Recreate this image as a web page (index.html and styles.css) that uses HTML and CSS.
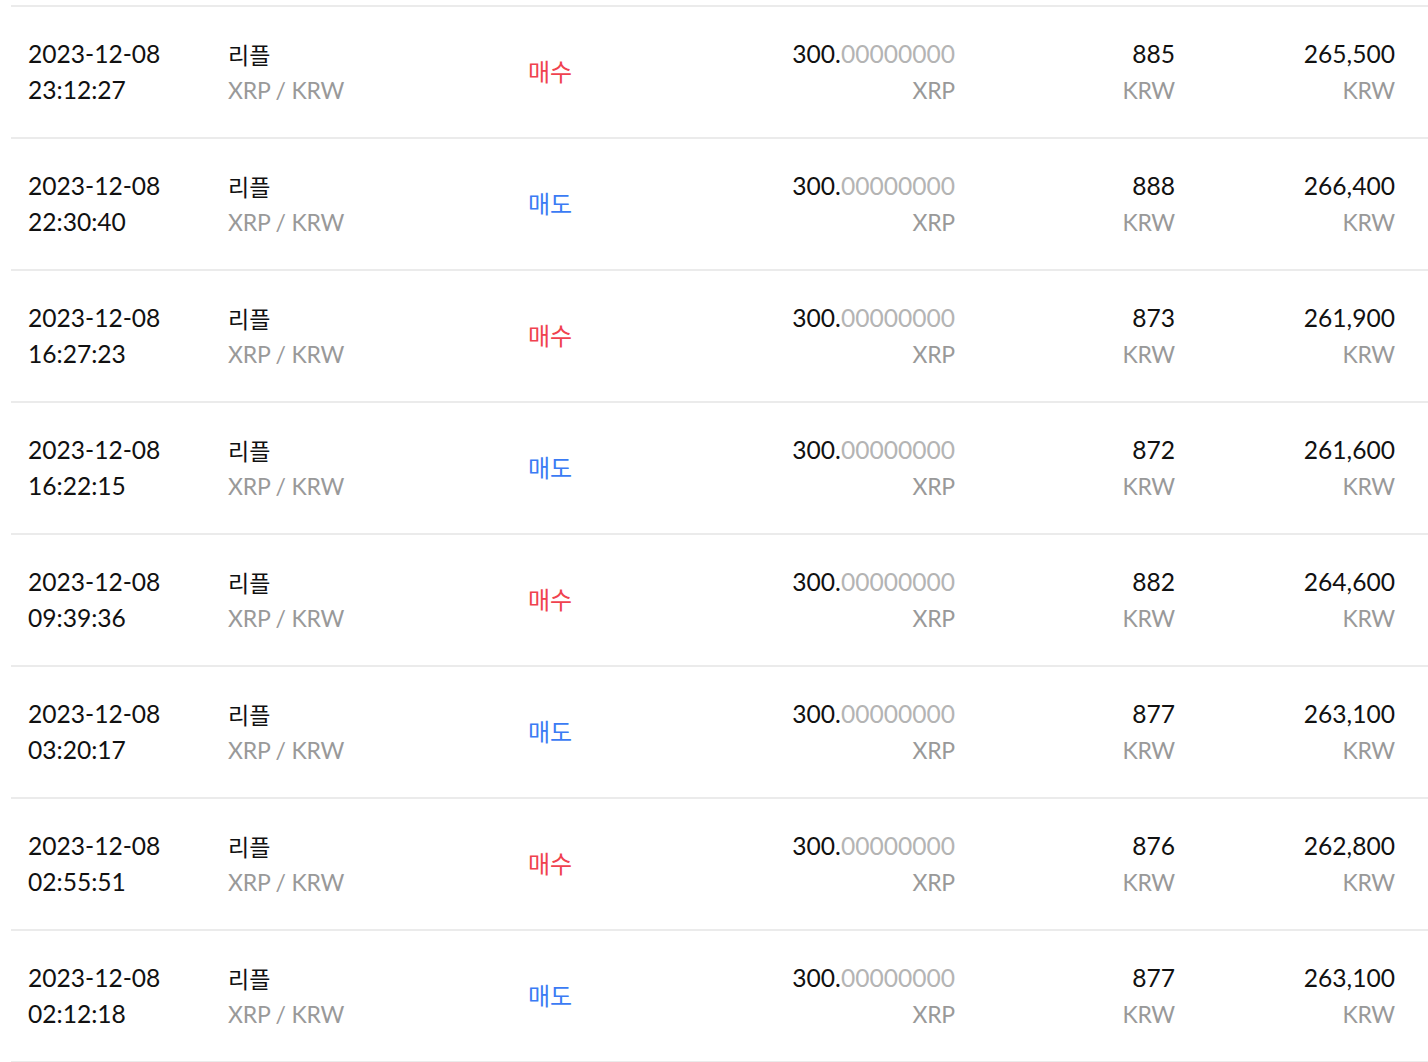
FILE: index.html
```html
<!DOCTYPE html>
<html lang="ko">
<head>
<meta charset="utf-8">
<title>체결 내역</title>
<link rel="stylesheet" href="styles.css">
</head>
<body>
<div class="list">
  <div class="row">
    <div class="cell"><div>2023-12-08</div><div>23:12:27</div></div>
    <div class="cell"><div class="kr">리플</div><div class="sub">XRP / KRW</div></div>
    <div class="type buy">매수</div>
    <div class="cell num"><div>300.<span class="dec">00000000</span></div><div class="sub">XRP</div></div>
    <div class="cell num"><div>885</div><div class="sub">KRW</div></div>
    <div class="cell num"><div>265,500</div><div class="sub">KRW</div></div>
  </div>
  <div class="row">
    <div class="cell"><div>2023-12-08</div><div>22:30:40</div></div>
    <div class="cell"><div class="kr">리플</div><div class="sub">XRP / KRW</div></div>
    <div class="type sell">매도</div>
    <div class="cell num"><div>300.<span class="dec">00000000</span></div><div class="sub">XRP</div></div>
    <div class="cell num"><div>888</div><div class="sub">KRW</div></div>
    <div class="cell num"><div>266,400</div><div class="sub">KRW</div></div>
  </div>
  <div class="row">
    <div class="cell"><div>2023-12-08</div><div>16:27:23</div></div>
    <div class="cell"><div class="kr">리플</div><div class="sub">XRP / KRW</div></div>
    <div class="type buy">매수</div>
    <div class="cell num"><div>300.<span class="dec">00000000</span></div><div class="sub">XRP</div></div>
    <div class="cell num"><div>873</div><div class="sub">KRW</div></div>
    <div class="cell num"><div>261,900</div><div class="sub">KRW</div></div>
  </div>
  <div class="row">
    <div class="cell"><div>2023-12-08</div><div>16:22:15</div></div>
    <div class="cell"><div class="kr">리플</div><div class="sub">XRP / KRW</div></div>
    <div class="type sell">매도</div>
    <div class="cell num"><div>300.<span class="dec">00000000</span></div><div class="sub">XRP</div></div>
    <div class="cell num"><div>872</div><div class="sub">KRW</div></div>
    <div class="cell num"><div>261,600</div><div class="sub">KRW</div></div>
  </div>
  <div class="row">
    <div class="cell"><div>2023-12-08</div><div>09:39:36</div></div>
    <div class="cell"><div class="kr">리플</div><div class="sub">XRP / KRW</div></div>
    <div class="type buy">매수</div>
    <div class="cell num"><div>300.<span class="dec">00000000</span></div><div class="sub">XRP</div></div>
    <div class="cell num"><div>882</div><div class="sub">KRW</div></div>
    <div class="cell num"><div>264,600</div><div class="sub">KRW</div></div>
  </div>
  <div class="row">
    <div class="cell"><div>2023-12-08</div><div>03:20:17</div></div>
    <div class="cell"><div class="kr">리플</div><div class="sub">XRP / KRW</div></div>
    <div class="type sell">매도</div>
    <div class="cell num"><div>300.<span class="dec">00000000</span></div><div class="sub">XRP</div></div>
    <div class="cell num"><div>877</div><div class="sub">KRW</div></div>
    <div class="cell num"><div>263,100</div><div class="sub">KRW</div></div>
  </div>
  <div class="row">
    <div class="cell"><div>2023-12-08</div><div>02:55:51</div></div>
    <div class="cell"><div class="kr">리플</div><div class="sub">XRP / KRW</div></div>
    <div class="type buy">매수</div>
    <div class="cell num"><div>300.<span class="dec">00000000</span></div><div class="sub">XRP</div></div>
    <div class="cell num"><div>876</div><div class="sub">KRW</div></div>
    <div class="cell num"><div>262,800</div><div class="sub">KRW</div></div>
  </div>
  <div class="row">
    <div class="cell"><div>2023-12-08</div><div>02:12:18</div></div>
    <div class="cell"><div class="kr">리플</div><div class="sub">XRP / KRW</div></div>
    <div class="type sell">매도</div>
    <div class="cell num"><div>300.<span class="dec">00000000</span></div><div class="sub">XRP</div></div>
    <div class="cell num"><div>877</div><div class="sub">KRW</div></div>
    <div class="cell num"><div>263,100</div><div class="sub">KRW</div></div>
  </div>
</div>
</body>
</html>
```

FILE: styles.css
```css
html, body {
  margin: 0;
  padding: 0;
  background: #ffffff;
}

body {
  font-family: Lato, "Noto Sans CJK KR", sans-serif;
  font-size: 24.6px;
  color: #111111;
  overflow: hidden;
}

.list {
  margin: 5px 0 0 11px;
  border-top: 2px solid #ebebeb;
}

.row {
  display: grid;
  grid-template-columns: 200px 300px 1fr 220px 220px 220px;
  align-items: center;
  height: 130px;
  padding: 0 33px 0 17px;
  border-bottom: 2px solid #ebebeb;
}

.cell {
  line-height: 36px;
}

.kr {
  font-family: "Noto Sans CJK KR", sans-serif;
  font-size: 23px;
}

.sub {
  font-size: 23px;
  letter-spacing: -0.2px;
  color: #999999;
}

.num {
  text-align: right;
}

.dec {
  color: #b4b4b4;
}

.type {
  font-family: "Noto Sans CJK KR", sans-serif;
  font-size: 24px;
  line-height: 36px;
  margin-top: -2px;
}

.buy {
  color: #f0424f;
}

.sell {
  color: #3b7bf4;
}
```
